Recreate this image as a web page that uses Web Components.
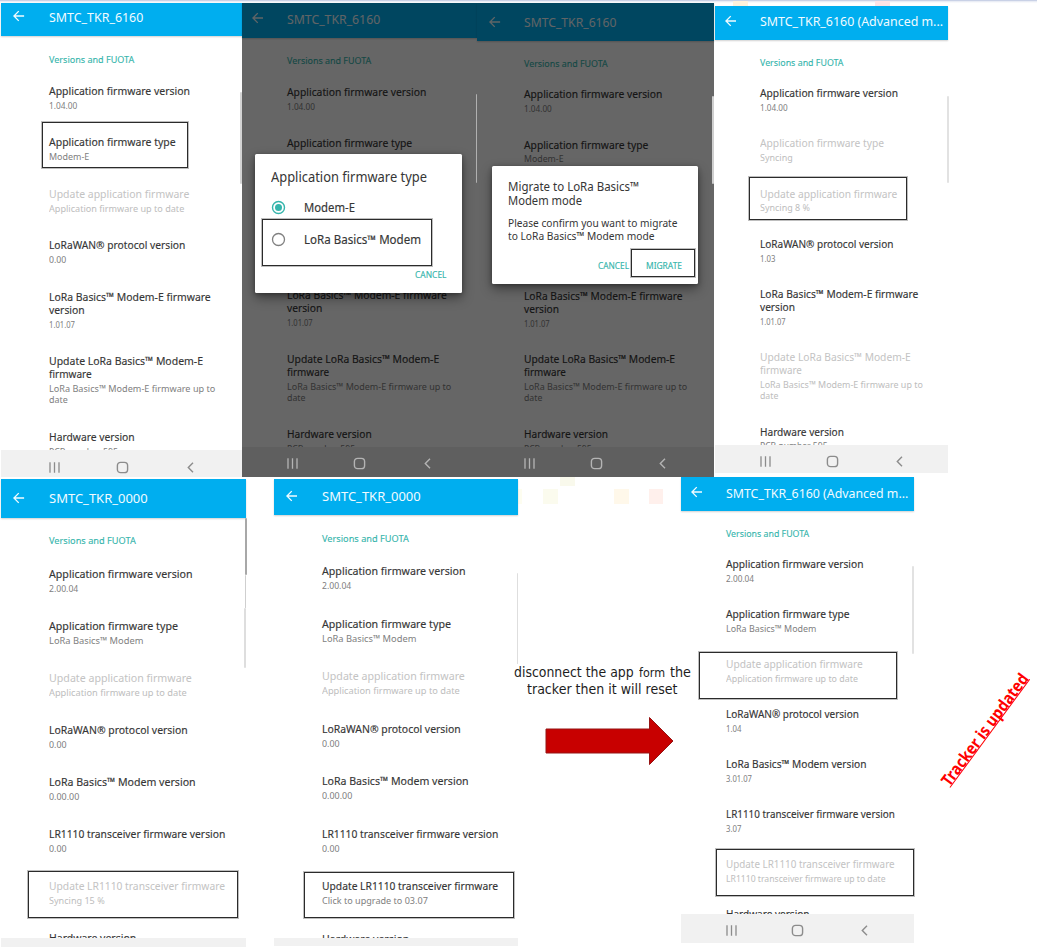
<!DOCTYPE html>
<html lang="en">
<head>
<meta charset="utf-8">
<title>Tracker firmware migration</title>
<style>
html, body { margin: 0; background: #fff; }
body { width: 1037px; height: 950px; overflow: hidden; font-family: "Noto Sans", "Open Sans", sans-serif; }
</style>
</head>
<body>
<guide-board>
  <phone-screen slot="top" heading="SMTC_TKR_6160" style="margin-left:1px;width:241px;height:474px;--s:1;--hh:33px;--ty:13.8px;--ax:12px;--left:47.5px;--sec:17.7px;--sg:18.2px;--pitch:51.5px;--nav:27px;--ny:3.5px;--n1:48px;--n2:116.3px;--n3:184.5px">
    <setting-row name="Application firmware version" value="1.04.00"></setting-row>
    <setting-row name="Application firmware type" value="Modem-E"></setting-row>
    <setting-row off name="Update application firmware" value="Application firmware up to date"></setting-row>
    <setting-row name="LoRaWAN® protocol version" value="0.00"></setting-row>
    <setting-row name="LoRa Basics™ Modem-E firmware|version" value="1.01.07"></setting-row>
    <setting-row name="Update LoRa Basics™ Modem-E|firmware" value="LoRa Basics™ Modem-E firmware up to|date"></setting-row>
    <setting-row name="Hardware version" value="PCB number 595"></setting-row>
    <mark-box slot="over" style="left:41px;top:119px;width:146px;height:46px"></mark-box>
    <edge-line slot="over" style="left:239px;top:89px;height:92px;--c:#d4d4d4"></edge-line>
  </phone-screen>

  <phone-screen slot="top" dim heading="SMTC_TKR_6160" style="width:235px;height:474px;--s:.988;--hh:34.5px;--ty:15.6px;--ax:9.5px;--left:44.8px;--sec:17.5px;--sg:17.9px;--pitch:50.8px;--nav:30px;--ny:3.2px;--n1:45.3px;--n2:112.5px;--n3:180px">
    <setting-row name="Application firmware version" value="1.04.00"></setting-row>
    <setting-row name="Application firmware type"></setting-row>
    <setting-row></setting-row>
    <setting-row></setting-row>
    <setting-row name="LoRa Basics™ Modem-E firmware|version" value="1.01.07"></setting-row>
    <setting-row name="Update LoRa Basics™ Modem-E|firmware" value="LoRa Basics™ Modem-E firmware up to|date"></setting-row>
    <setting-row name="Hardware version" value="PCB number 595"></setting-row>
    <edge-line slot="over" style="left:234px;top:91px;height:89px;--c:#b0b0b0"></edge-line>
    <dialog-card slot="over" style="left:13.4px;top:151px;width:207px;height:139px">
      <choice-group></choice-group>
    </dialog-card>
    <mark-box slot="over" style="left:20.4px;top:216px;width:170px;height:46.5px"></mark-box>
  </phone-screen>

  <phone-screen slot="top" dim heading="SMTC_TKR_6160" style="width:236.5px;height:474px;--s:.981;--hh:37.5px;--ty:19.3px;--ax:12px;--left:46.8px;--sec:17px;--sg:17.7px;--pitch:50.4px;--nav:30px;--ny:2.7px;--n1:46.8px;--n2:113.7px;--n3:180.5px">
    <setting-row name="Application firmware version" value="1.04.00"></setting-row>
    <setting-row name="Application firmware type" value="Modem-E"></setting-row>
    <setting-row></setting-row>
    <setting-row></setting-row>
    <setting-row name="LoRa Basics™ Modem-E firmware|version" value="1.01.07"></setting-row>
    <setting-row name="Update LoRa Basics™ Modem-E|firmware" value="LoRa Basics™ Modem-E firmware up to|date"></setting-row>
    <setting-row name="Hardware version" value="PCB number 595"></setting-row>
    <edge-line slot="over" style="left:235px;top:93px;height:88px;--c:#cfcfcf"></edge-line>
    <dialog-card slot="over" style="left:15.4px;top:163px;width:206px;height:118px">
      <confirm-copy></confirm-copy>
    </dialog-card>
    <mark-box slot="over" style="left:154px;top:245.5px;width:64px;height:28.5px"></mark-box>
  </phone-screen>

  <phone-screen slot="top" heading="SMTC_TKR_6160 (Advanced m..." style="margin:3px 0 0 1.9px;width:233px;height:467px;--s:.979;--hh:33.5px;--ty:15px;--ax:9.5px;--left:44.9px;--sec:17.2px;--sg:17.5px;--pitch:50.2px;--nav:28.5px;--ny:3px;--n1:45px;--n2:111.5px;--n3:178.5px">
    <setting-row name="Application firmware version" value="1.04.00"></setting-row>
    <setting-row off name="Application firmware type" value="Syncing"></setting-row>
    <setting-row off name="Update application firmware" value="Syncing 8 %"></setting-row>
    <setting-row name="LoRaWAN® protocol version" value="1.03"></setting-row>
    <setting-row name="LoRa Basics™ Modem-E firmware|version" value="1.01.07"></setting-row>
    <setting-row off name="Update LoRa Basics™ Modem-E|firmware" value="LoRa Basics™ Modem-E firmware up to|date"></setting-row>
    <setting-row name="Hardware version" value="PCB number 595"></setting-row>
    <mark-box slot="over" style="left:33.5px;top:170.5px;width:158px;height:43.5px"></mark-box>
    <edge-line slot="over" style="left:232px;top:90px;height:87px;--c:#e2e2e2"></edge-line>
  </phone-screen>

  <phone-screen slot="bottom" heading="SMTC_TKR_0000" style="margin:1.5px 0 0 1px;width:245px;height:468px;--s:1.018;--hh:39px;--ty:19.6px;--ax:12px;--left:48.2px;--sec:17.8px;--sg:19.4px;--pitch:52.1px;--nav:8.5px">
    <setting-row name="Application firmware version" value="2.00.04"></setting-row>
    <setting-row name="Application firmware type" value="LoRa Basics™ Modem"></setting-row>
    <setting-row off name="Update application firmware" value="Application firmware up to date"></setting-row>
    <setting-row name="LoRaWAN® protocol version" value="0.00"></setting-row>
    <setting-row name="LoRa Basics™ Modem version" value="0.00.00"></setting-row>
    <setting-row name="LR1110 transceiver firmware version" value="0.00"></setting-row>
    <setting-row off name="Update LR1110 transceiver firmware" value="Syncing 15 %"></setting-row>
    <setting-row name="Hardware version"></setting-row>
    <mark-box slot="over" style="left:27px;top:392.5px;width:210px;height:47px"></mark-box>
    <edge-line slot="over" style="left:244px;top:39px;height:57px;--c:#a8a8a8"></edge-line>
    <edge-line slot="over" style="left:243.5px;top:96px;height:33px;--c:#cfcfcf"></edge-line>
    <edge-line slot="over" style="left:243px;top:129px;height:60px;--c:#dedede"></edge-line>
  </phone-screen>

  <phone-screen slot="bottom" heading="SMTC_TKR_0000" style="margin:1.5px 0 0 27.5px;width:244.5px;height:467.5px;--s:1.018;--hh:36.5px;--ty:17.5px;--ax:12px;--left:48.1px;--sec:18.3px;--sg:19.2px;--pitch:52.5px;--nav:8px">
    <setting-row name="Application firmware version" value="2.00.04"></setting-row>
    <setting-row name="Application firmware type" value="LoRa Basics™ Modem"></setting-row>
    <setting-row off name="Update application firmware" value="Application firmware up to date"></setting-row>
    <setting-row name="LoRaWAN® protocol version" value="0.00"></setting-row>
    <setting-row name="LoRa Basics™ Modem version" value="0.00.00"></setting-row>
    <setting-row name="LR1110 transceiver firmware version" value="0.00"></setting-row>
    <setting-row name="Update LR1110 transceiver firmware" value="Click to upgrade to 03.07"></setting-row>
    <setting-row name="Hardware version"></setting-row>
    <mark-box slot="over" style="left:30.5px;top:393.5px;width:210px;height:46px"></mark-box>
    <edge-line slot="over" style="left:243px;top:94.5px;height:91px;--c:#dedede"></edge-line>
  </phone-screen>

  <reset-note slot="bottom"></reset-note>

  <phone-screen slot="bottom" heading="SMTC_TKR_6160 (Advanced m..." style="width:233px;height:465.5px;--s:.975;--hh:34px;--ty:15.6px;--ax:9.5px;--left:44.6px;--sec:17px;--sg:17.1px;--pitch:50px;--nav:29px;--ny:3px;--n1:44.5px;--n2:111px;--n3:177.5px">
    <setting-row name="Application firmware version" value="2.00.04"></setting-row>
    <setting-row name="Application firmware type" value="LoRa Basics™ Modem"></setting-row>
    <setting-row off name="Update application firmware" value="Application firmware up to date"></setting-row>
    <setting-row name="LoRaWAN® protocol version" value="1.04"></setting-row>
    <setting-row name="LoRa Basics™ Modem version" value="3.01.07"></setting-row>
    <setting-row name="LR1110 transceiver firmware version" value="3.07"></setting-row>
    <setting-row off name="Update LR1110 transceiver firmware" value="LR1110 transceiver firmware up to date"></setting-row>
    <setting-row name="Hardware version"></setting-row>
    <mark-box slot="over" style="left:17.5px;top:175px;width:198px;height:46.5px"></mark-box>
    <mark-box slot="over" style="left:35.2px;top:371.5px;width:198px;height:47px"></mark-box>
    <edge-line slot="over" style="left:231px;top:89px;height:88px;--c:#e2e2e2"></edge-line>
  </phone-screen>

  <final-note slot="bottom"></final-note>
</guide-board>

<script>
// Drawn widths of each text, in px at scale 1.
const WIDTHS = {
  "Versions and FUOTA": 85.3, "SMTC_TKR_6160": 94.3, "SMTC_TKR_0000": 97,
  "SMTC_TKR_6160 (Advanced m...": 187,
  "Application firmware version": 141, "Application firmware type": 126.7,
  "Update application firmware": 140.3, "Application firmware up to date": 135.3,
  "LoRaWAN® protocol version": 136.3, "LoRa Basics™ Modem-E firmware": 161.7,
  "version": 35.7, "Update LoRa Basics™ Modem-E": 154, "firmware": 42.7,
  "LoRa Basics™ Modem-E firmware up to": 166.3, "date": 18.7, "Hardware version": 85.7,
  "1.04.00": 28.3, "Modem-E": 40.3, "0.00": 17.3, "1.01.07": 26, "PCB number 595": 69,
  "LoRa Basics™ Modem": 92.7, "LoRa Basics™ Modem version": 144,
  "LR1110 transceiver firmware version": 173.2, "Update LR1110 transceiver firmware": 172.9,
  "Syncing 15 %": 54.7, "2.00.04": 28.8, "0.00.00": 29.8, "Click to upgrade to 03.07": 104,
  "Syncing": 33.4, "Syncing 8 %": 51, "1.03": 15.8, "1.04": 15.8, "3.01.07": 26.5, "3.07": 15.8,
  "LR1110 transceiver firmware up to date": 163.6
};

function define(name, html, setup) {
  const tpl = document.createElement('template');
  tpl.innerHTML = html;
  customElements.define(name, class extends HTMLElement {
    connectedCallback() {
      if (this.shadowRoot) return;
      const root = this.attachShadow({ mode: 'open' });
      root.append(tpl.content.cloneNode(true));
      if (setup) setup(this, root);
    }
  });
}

const lines = [];
define('fit-line', `<style>
  :host { display: block; width: max-content; white-space: nowrap; transform-origin: 0 50%; }
</style><slot></slot>`, el => lines.push(el));

const fitLines = text => text.split('|').map(part => {
  const line = document.createElement('fit-line');
  line.textContent = part;
  return line;
});

define('guide-board', `<style>
  :host { display: block; position: relative; box-sizing: border-box; width: 1037px; height: 950px; overflow: hidden; background: #fff; }
  .strip { height: 1px; background: #c9d1e6; }
  .gap { height: 2px; background: linear-gradient(#e3e7f2, #fff); }
  .row { display: flex; align-items: flex-start; height: 474px; }
  .low { height: 473px; }
  i { position: absolute; width: 14.5px; height: 14.5px; }
</style>
<div class="strip"></div><div class="gap"></div>
<i style="left:733px;top:1px;height:5px;background:#fff2dc"></i>
<i style="left:875px;top:1px;height:5px;background:#ffe3e5"></i>
<i style="left:543px;top:489px;background:#fbfbee"></i>
<i style="left:518px;top:489px;width:4px;background:#fdfdf0"></i>
<i style="left:560px;top:477px;height:9px;background:#f9f9ec"></i>
<i style="left:614px;top:489px;background:#fff8ea"></i>
<i style="left:648.5px;top:489px;background:#fff0ec"></i>
<div class="row"><slot name="top"></slot></div>
<div class="row low"><slot name="bottom"></slot></div>`);

define('phone-screen', `<style>
  :host { display: flex; flex-direction: column; flex: none; position: relative; background: #fff; }
  :host([dim]) { z-index: 1; }
  header { flex: none; box-sizing: border-box; height: var(--hh); background: #00aeef; color: #f1fbff; box-shadow: 0 1px 1.5px rgba(0,0,0,.18); display: flex; padding-top: calc(var(--ty) - 10px); }
  .arrow { flex: none; width: 11.5px; height: 12px; margin: 3.6px 0 0 var(--ax); }
  header fit-line { margin-left: calc(var(--left) - var(--ax) - 11.5px); font-size: calc(13.2px * var(--s)); line-height: 20px; }
  main { flex: 1; min-height: 0; overflow: hidden; box-sizing: border-box; padding: var(--sec) 0 0 var(--left); }
  .section { color: #35b5ac; font-size: min(9.7px, calc(9.8px * var(--s))); line-height: 12px; margin-bottom: var(--sg); -webkit-text-stroke: .12px; }
  nav { flex: none; position: relative; box-sizing: border-box; height: var(--nav); background: #f1f1f1; color: #8c8c8c; overflow: hidden; }
  nav.full { display: grid; grid-template-columns: calc(var(--n1) + 12px) calc(var(--n2) - var(--n1)) calc(var(--n3) - var(--n2)); padding-top: calc(var(--ny) + 7px); }
  nav svg { width: 13px; height: 13px; justify-self: end; }
  .veil { display: none; }
  :host([dim]) .veil { display: block; position: absolute; inset: 0; background: rgba(0,0,0,.6); }
  :host([dim]) nav { background: #5f5f5f; z-index: 2; color: #b4b4b4; }
</style>
<header><svg class="arrow" viewBox="0 0 12 12" fill="none" stroke="currentColor" stroke-width="1.4"><path d="M11.6 6H1M6 .9 1 6l5 5.1"/></svg><fit-line class="h"></fit-line></header>
<main><fit-line class="section">Versions and FUOTA</fit-line><slot></slot></main>
<div class="veil"></div>
<nav></nav>
<slot name="over"></slot>`, (el, root) => {
  root.querySelector('.h').textContent = el.getAttribute('heading');
  const nav = root.querySelector('nav');
  if (parseFloat(getComputedStyle(el).getPropertyValue('--nav')) > 20) {
    nav.className = 'full';
    nav.innerHTML = `<svg viewBox="0 0 13 13" stroke="currentColor" stroke-width="1.3"><path d="M2 1.2v10.6M6.5 1.2v10.6M11 1.2v10.6"/></svg>
<svg viewBox="0 0 13 13" fill="none" stroke="currentColor" stroke-width="1.4"><rect x="1.4" y="1.4" width="10.2" height="10.2" rx="3.2"/></svg>
<svg viewBox="0 0 13 13" fill="none" stroke="currentColor" stroke-width="1.4"><path d="M9 1.8 4.3 6.5 9 11.2"/></svg>`;
  }
});

define('setting-row', `<style>
  :host { display: block; color: #363636; padding-bottom: calc(var(--pitch) - 27.15px); }
  .name { min-height: 13px; font-size: min(11.45px, calc(11.5px * var(--s))); line-height: 13px; -webkit-text-stroke: .15px; }
  .value { margin-top: 2.85px; min-height: 11.3px; font-size: min(9.8px, calc(9.8px * var(--s))); line-height: 11.3px; color: #808080; }
  :host([off]) .name { color: #c3c3c3; -webkit-text-stroke: 0; }
  :host([off]) .value { color: #bdbdbd; }
</style><div class="name"></div><div class="value"></div>`, (el, root) => {
  for (const part of ['name', 'value']) {
    const text = el.getAttribute(part);
    if (text) root.querySelector('.' + part).append(...fitLines(text));
  }
});

define('mark-box', `<style>
  :host { position: absolute; box-sizing: border-box; border: 1.5px solid #2b2b2b; z-index: 4; outline: .5px solid rgba(40,40,40,.3); }
</style>`);

define('edge-line', `<style>
  :host { position: absolute; width: 1.5px; background: var(--c); border-radius: 1px; z-index: 3; }
</style>`);

define('dialog-card', `<style>
  :host { display: block; position: absolute; z-index: 3; box-sizing: border-box; background: #fff; border-radius: 1.5px; box-shadow: 0 5px 12px rgba(0,0,0,.4), 0 1px 4px rgba(0,0,0,.3); color: #363636; --s: 1; }
</style><slot></slot>`);

define('choice-group', `<style>
  :host { display: block; padding: 12.6px 16px 0; }
  .t { font-size: 13.6px; line-height: 20px; }
  .opt { display: grid; grid-template-columns: 32.5px auto; align-items: center; height: 32.4px; font-size: 12px; line-height: 17.4px; -webkit-text-stroke: .15px; }
  .first { margin-top: 4.4px; }
  .opt svg { width: 15px; height: 15px; }
  .opt fit-line { margin-top: 1px; }
  .act { margin: 13px 0 0 143.3px; font-size: 9.6px; line-height: 12px; color: #35b5ac; -webkit-text-stroke: .15px; }
</style>
<fit-line class="t" w="156">Application firmware type</fit-line>
<div class="opt first"><svg viewBox="0 0 15 15"><circle cx="7.5" cy="7.5" r="6" fill="none" stroke="#35b5ac" stroke-width="1.4"/><circle cx="7.5" cy="7.5" r="3.5" fill="#35b5ac"/></svg><fit-line w="51">Modem-E</fit-line></div>
<div class="opt"><svg viewBox="0 0 15 15"><circle cx="7.5" cy="7.5" r="6" fill="none" stroke="#808080" stroke-width="1.3"/></svg><fit-line w="117">LoRa Basics™ Modem</fit-line></div>
<fit-line class="act" w="31.5">CANCEL</fit-line>`);

define('confirm-copy', `<style>
  :host { display: block; padding: 13.8px 16px 0; }
  .t { font-size: 12.2px; line-height: 14.3px; }
  .b { margin-top: 8px; font-size: 11.2px; line-height: 13px; }
  .acts { display: grid; grid-template-columns: 48px auto; margin: 17.3px 0 0 90px; font-size: 9.5px; line-height: 12px; color: #35b5ac; -webkit-text-stroke: .15px; }
</style>
<div class="t"><fit-line w="131">Migrate to LoRa Basics™</fit-line><fit-line w="74">Modem mode</fit-line></div>
<div class="b"><fit-line w="169.5">Please confirm you want to migrate</fit-line><fit-line w="146.5">to LoRa Basics™ Modem mode</fit-line></div>
<div class="acts"><fit-line w="31">CANCEL</fit-line><fit-line w="36">MIGRATE</fit-line></div>`);

define('reset-note', `<style>
  :host { display: block; flex: none; width: 181px; height: 300px; margin: 0 .3px 0 -18px; padding: 187px 0 0 14px; box-sizing: border-box; position: relative; z-index: 2; font-family: "DejaVu Sans", sans-serif; font-size: 14.4px; line-height: 17px; color: #1d1d1d; }
  .one { display: grid; grid-template-columns: 124.5px 31px auto; align-items: baseline; }
  .small { font-size: 12.4px; }
  .two { padding-left: 12.5px; }
  svg { display: block; width: 130px; height: 50px; margin: 17.5px 0 0 30.5px; }
</style>
<div class="one"><fit-line w="119.7">disconnect the app</fit-line><fit-line class="small" w="26">form</fit-line><fit-line w="21">the</fit-line></div>
<div class="two"><fit-line w="150.5">tracker then it will reset</fit-line></div>
<svg viewBox="0 0 130 50"><path d="M1 13h103.500V1.500L128 25l-23.500 23.500V37H1z" fill="#c80000" stroke="#951414"/></svg>`);

define('final-note', `<style>
  :host { display: block; flex: none; width: 120px; height: 140px; margin: 190px 0 0 3px; }
  .turn { width: 135px; transform: rotate(-53.6deg); transform-origin: 0 100%; margin: 106px 0 0 32.8px; color: #f00; font-size: 16.4px; font-weight: 700; }
  .turn fit-line { border-bottom: 1.4px solid #f00; line-height: 15px; height: 13.6px; }
</style><div class="turn"><fit-line w="134.5">Tracker is updated</fit-line></div>`);

// Stretch or condense every line to its drawn width.
const natural = lines.map(el => {
  if (el.closest('.turn')) return el.offsetWidth;
  const range = document.createRange();
  range.selectNodeContents(el);
  return range.getBoundingClientRect().width;
});
lines.forEach((el, i) => {
  const scale = parseFloat(getComputedStyle(el).getPropertyValue('--s')) || 1;
  const target = parseFloat(el.getAttribute('w')) || WIDTHS[el.textContent] * scale;
  if (target && natural[i]) el.style.transform = 'scaleX(' + (target / natural[i]).toFixed(4) + ')';
});
</script>
</body>
</html>
